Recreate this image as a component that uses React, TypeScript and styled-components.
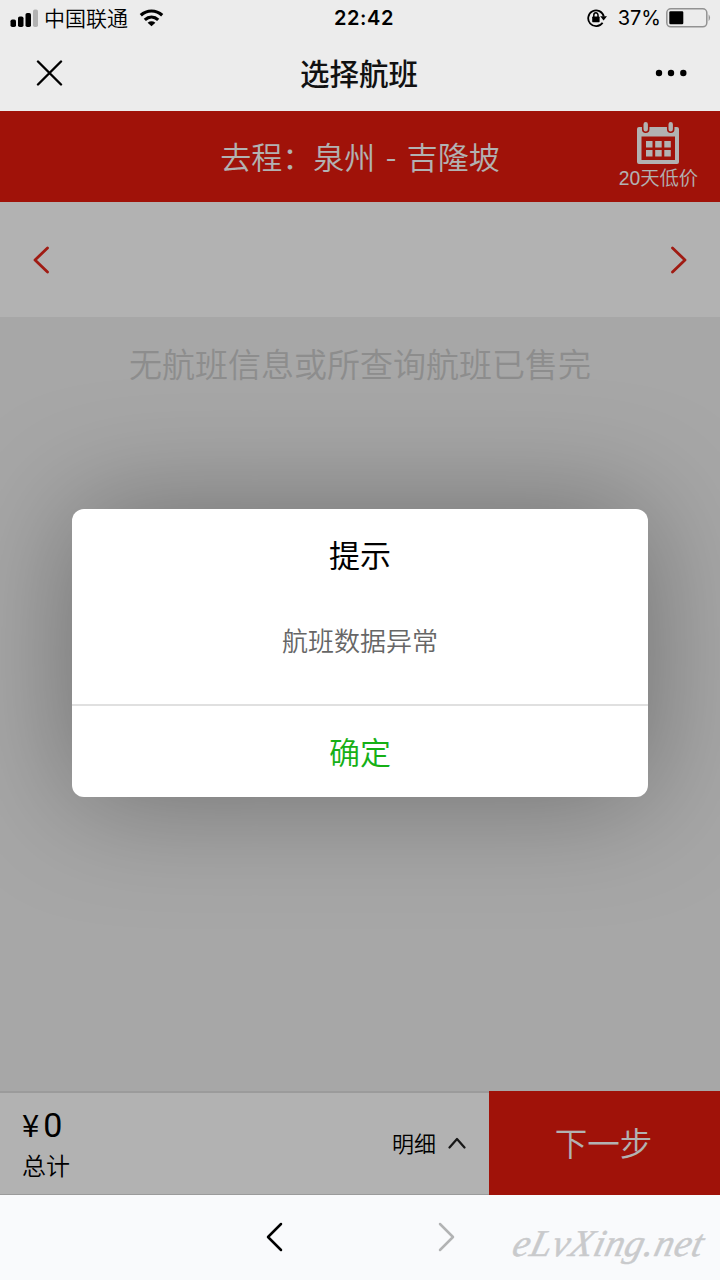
import React from 'react';
import styled, { createGlobalStyle } from 'styled-components';

const cjk = '"Noto Sans CJK SC", sans-serif';

const GlobalStyle = createGlobalStyle`
  * { box-sizing: border-box; }
  body { margin: 0; font-family: ${cjk}; font-weight: 350; color: #000; }
  button { border: 0; padding: 0; margin: 0; background: none; font-family: inherit; font-weight: inherit; color: inherit; }
  svg { display: block; flex: none; }
`;

const Screen = styled.div`
  position: relative;
  width: 720px;
  height: 1280px;
  display: flex;
  flex-direction: column;
  overflow: hidden;
`;

const TopBars = styled.header`
  height: 111px;
  background: #ececec;
`;

const StatusBar = styled.div`
  display: grid;
  grid-template-columns: 1fr auto 1fr;
  height: 36px;
  align-items: center;
  padding: 0 9px 0 10px;
`;

const StatusGroup = styled.div<{ $end?: boolean }>`
  display: flex;
  align-items: center;
  justify-content: ${(p) => (p.$end ? 'flex-end' : 'flex-start')};
`;

const Carrier = styled.span`
  margin: 0 11px 2px 6px;
  font-size: 21px;
  line-height: 34px;
`;

const Clock = styled.span`
  margin-left: 7px;
  font: 600 20px/36px Inter, sans-serif;
  letter-spacing: 0.6px;
`;

const BatteryText = styled.span`
  margin: 0 5px 0 11px;
  font: 400 20px/36px Inter, sans-serif;
`;

const NavBar = styled.div`
  display: grid;
  grid-template-columns: 1fr auto 1fr;
  align-items: center;
  height: 74px;
  padding: 0 33px 0 36px;
`;

const NavTitle = styled.h1`
  margin: 0 5px 2px 0;
  font-size: 29.5px;
  line-height: 72px;
  font-weight: 500;
  color: #111;
`;

const IconButton = styled.button<{ $end?: boolean }>`
  display: flex;
  justify-self: ${(p) => (p.$end ? 'end' : 'start')};
`;

const WebView = styled.main`
  position: relative;
  display: flex;
  flex-direction: column;
  height: 1084px;
  overflow: hidden;
  background: #efefef;
`;

const RouteBar = styled.div`
  display: grid;
  grid-template-columns: 1fr auto 1fr;
  height: 91px;
  padding-right: 22px;
  background: #e61a0e;
  color: #fff;
`;

const RouteText = styled.h2`
  grid-column: 2;
  margin: 0 0 0 22px;
  font-size: 31px;
  line-height: 90px;
  font-weight: 350;
  word-spacing: 3.5px;
  white-space: pre;
`;

const LowFare = styled.button`
  justify-self: end;
  display: flex;
  flex-direction: column;
  align-items: center;
  padding-top: 11px;
  font: 350 19.3px/28px "Liberation Sans", ${cjk};
  color: #fff;
`;

const DateStrip = styled.div`
  display: flex;
  align-items: center;
  justify-content: space-between;
  height: 115px;
  padding: 0 33px;
  background: #fff;
`;

const EmptyText = styled.p`
  flex: 1;
  margin: 0;
  padding-top: 22px;
  text-align: center;
  font-size: 33px;
  line-height: 48px;
  color: #cacaca;
`;

const Checkout = styled.div`
  display: flex;
  height: 104px;
`;

const Summary = styled.div`
  flex: 1;
  display: flex;
  align-items: center;
  justify-content: space-between;
  padding: 0 23px 0 22px;
  background: #fff;
  border-top: 2px solid #dfdfdf;
  border-bottom: 1px solid #dfdfdf;
`;

const Total = styled.div`
  display: flex;
  flex-direction: column;
`;

const Price = styled.span`
  font: 400 34px/40px Roboto, ${cjk};
  margin-bottom: 2px;
`;

const Yen = styled.span`
  font: 400 31px/40px ${cjk};
  margin-right: 4px;
`;

const TotalLabel = styled.span`
  font-size: 24px;
  line-height: 36px;
`;

const Details = styled.button`
  display: flex;
  align-items: center;
  gap: 12px;
  height: 100px;
  padding-bottom: 1px;
  font-size: 22px;
`;

const DetailsLabel = styled.span`
  padding-bottom: 2px;
`;

const NextButton = styled.button`
  width: 231px;
  padding: 0 2px 3px 0;
  background: #e61a0e;
  color: #fff;
  font-size: 32.5px;
`;

const Mask = styled.div`
  position: absolute;
  inset: 0;
  display: flex;
  justify-content: center;
  align-items: flex-start;
  padding-top: 398px;
  background: rgba(0, 0, 0, 0.3);
`;

const Dialog = styled.section`
  width: 576px;
  height: 288px;
  display: flex;
  flex-direction: column;
  border-radius: 12px;
  background: #fff;
  box-shadow: 0 0 120px rgba(0, 0, 0, 0.34);
  text-align: center;
`;

const DialogTitle = styled.h3`
  margin: 23px 0 0;
  font-size: 31px;
  line-height: 44px;
  font-weight: 400;
`;

const DialogBody = styled.p`
  flex: 1;
  margin: 0;
  padding-top: 45px;
  font-size: 26px;
  line-height: 38px;
  color: #666;
`;

const ConfirmButton = styled.button`
  height: 93px;
  padding-bottom: 2px;
  border-top: 2px solid #e0e0e0;
  font-size: 31px;
  color: #16b016;
`;

const BrowserBar = styled.footer`
  position: relative;
  display: flex;
  align-items: center;
  justify-content: center;
  gap: 153px;
  height: 85px;
  padding-bottom: 1px;
  background: #f9fafc;
`;

const Watermark = styled.span`
  position: absolute;
  right: 16px;
  top: 26px;
  font: italic 400 38px/44px "Liberation Serif", cursive;
  letter-spacing: 0.7px;
  color: #c9cacc;
  -webkit-text-stroke: 0.5px #c9cacc;
  transform: skewX(-14deg);
`;

type ChevronProps = { points: string; w: number; h: number; color: string; stroke: number };

const Chevron = ({ points, w, h, color, stroke }: ChevronProps) => (
  <svg width={w} height={h} fill="none" stroke={color} strokeWidth={stroke} strokeLinecap="round" strokeLinejoin="round">
    <polyline points={points} />
  </svg>
);

const SignalIcon = () => (
  <svg width="28" height="18">
    <rect x="0.5" y="10.5" width="5.5" height="7.5" rx="1.8" />
    <rect x="8" y="7.5" width="5.5" height="10.5" rx="1.8" />
    <rect x="15.5" y="4" width="5.5" height="14" rx="1.8" />
    <rect x="23" y="0.5" width="5" height="17.5" rx="1.8" fill="#b2b2b2" />
  </svg>
);

const WifiIcon = () => (
  <svg width="26" height="18" fill="none" stroke="#000" strokeWidth="3.2">
    <path d="M1.8 6.2C8 .6 17 .6 23.2 6.2" />
    <path d="M5.8 10.9C9.8 7.3 15.2 7.3 19.2 10.9" />
    <path d="M12.5 17.3 8.6 13.7Q12.5 10.9 16.4 13.7Z" fill="#000" stroke="none" />
  </svg>
);

const LockIcon = () => (
  <svg width="20" height="20" fill="none" stroke="#000" strokeWidth="1.8">
    <path d="M15.6 14.8A7.9 7.9 0 1 1 16.8 8.5" />
    <path d="M13.2 8.2H20L16.6 12.4Z" fill="#000" stroke="none" />
    <rect x="5.2" y="8.5" width="7.4" height="5.8" rx="0.7" fill="#000" stroke="none" />
    <path d="M6.8 9V7.2a2.1 2.4 0 0 1 4.2 0V9" strokeWidth="1.5" />
  </svg>
);

const BatteryIcon = () => (
  <svg width="45" height="20">
    <rect x="0.8" y="0.8" width="40" height="18" rx="4" fill="none" stroke="#929292" strokeWidth="1.5" />
    <rect x="3.3" y="3.3" width="14" height="13" rx="1.2" />
    <path d="M42.6 6.3Q45.5 9.8 42.6 13.3Z" fill="#929292" />
  </svg>
);

const CalendarIcon = () => (
  <svg width="42" height="43" viewBox="0 0 42 43">
    <path fill="#fff" fillRule="evenodd" d="M2 5H40Q42 5 42 7V40Q42 42 40 42H2Q0 42 0 40V7Q0 5 2 5ZM4.5 14.5V38H38V14.5Z" />
    <g stroke="#e61a0e" strokeWidth="7.5" strokeLinecap="round"><path d="M8.7 2.5V7.3M33.7 2.5V7.3" /></g>
    <g stroke="#fff" strokeWidth="4.4" strokeLinecap="round"><path d="M8.7 2.3V7.3M33.7 2.3V7.3" /></g>
    <path fill="#fff" d="M9 19h6.5v6.5H9zM18.2 19h6.5v6.5h-6.5zM27.3 19h6.5v6.5h-6.5zM9 28h6.5v6.5H9zM18.2 28h6.5v6.5h-6.5zM27.3 28h6.5v6.5h-6.5z" />
  </svg>
);

export default function App() {
  return (
    <Screen>
      <GlobalStyle />
      <TopBars>
        <StatusBar>
          <StatusGroup>
            <SignalIcon />
            <Carrier>中国联通</Carrier>
            <WifiIcon />
          </StatusGroup>
          <Clock>22:42</Clock>
          <StatusGroup $end>
            <LockIcon />
            <BatteryText>37%</BatteryText>
            <BatteryIcon />
          </StatusGroup>
        </StatusBar>
        <NavBar>
          <IconButton aria-label="关闭">
            <svg width="27" height="27" stroke="#000" strokeWidth="2.4" strokeLinecap="round">
              <path d="M2 1.5 25 24.5M25 1.5 2 24.5" />
            </svg>
          </IconButton>
          <NavTitle>选择航班</NavTitle>
          <IconButton $end aria-label="更多">
            <svg width="32" height="8">
              <circle cx="4" cy="4" r="3.2" />
              <circle cx="16" cy="4" r="3.2" />
              <circle cx="28.3" cy="4" r="3.2" />
            </svg>
          </IconButton>
        </NavBar>
      </TopBars>
      <WebView>
        <RouteBar>
          <RouteText>去程：泉州 - 吉隆坡</RouteText>
          <LowFare>
            <CalendarIcon />
            20天低价
          </LowFare>
        </RouteBar>
        <DateStrip>
          <Chevron w={17} h={28} points="14.5,2 2,14 14.5,26" color="#e5281c" stroke={2.8} />
          <Chevron w={17} h={28} points="2.5,2 15,14 2.5,26" color="#e5281c" stroke={2.8} />
        </DateStrip>
        <EmptyText>无航班信息或所查询航班已售完</EmptyText>
        <Checkout>
          <Summary>
            <Total>
              <Price><Yen>¥</Yen>0</Price>
              <TotalLabel>总计</TotalLabel>
            </Total>
            <Details>
              <DetailsLabel>明细</DetailsLabel>
              <Chevron w={18} h={12} points="1.5,10.5 9,2 16.5,10.5" color="#222" stroke={2.2} />
            </Details>
          </Summary>
          <NextButton>下一步</NextButton>
        </Checkout>
        <Mask>
          <Dialog role="dialog">
            <DialogTitle>提示</DialogTitle>
            <DialogBody>航班数据异常</DialogBody>
            <ConfirmButton>确定</ConfirmButton>
          </Dialog>
        </Mask>
      </WebView>
      <BrowserBar>
        <Chevron w={18} h={30} points="15,2 2,15 15,28" color="#000" stroke={2.5} />
        <Chevron w={18} h={30} points="3,2 16,15 3,28" color="#b2b3b4" stroke={2.5} />
        <Watermark>eLvXing.net</Watermark>
      </BrowserBar>
    </Screen>
  );
}
